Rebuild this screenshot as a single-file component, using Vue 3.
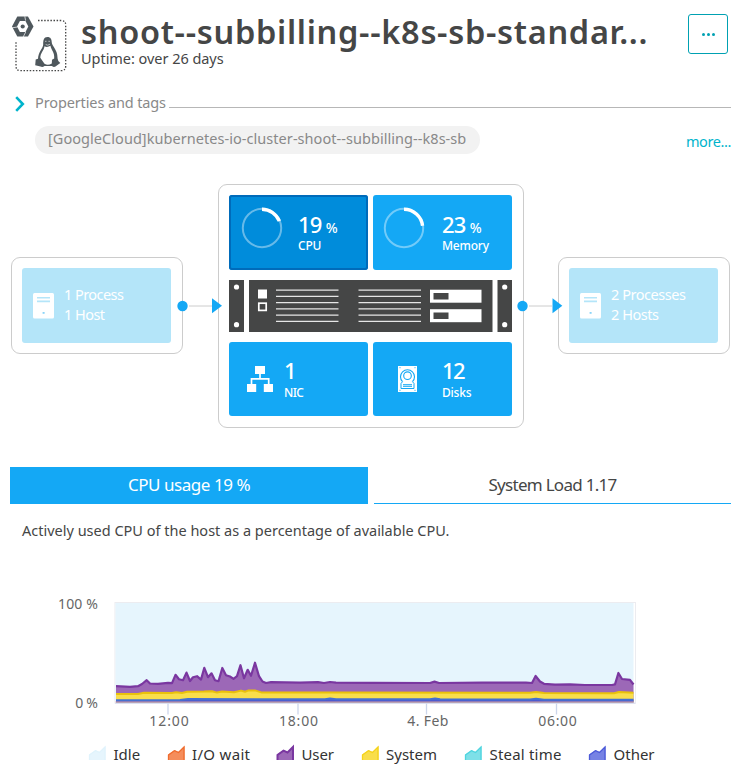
<script setup>
const BASE = 702.5
const user = [
  [116, 686.2], [130, 686.8], [138, 686.2], [142, 684], [146.7, 680.2], [150, 683.5], [158, 683.8], [168, 682.9],
  [172, 683.2], [175.5, 674.8], [179, 679.2], [183, 680.2], [186.5, 672.6], [190, 681], [193, 677.2], [197, 676.2],
  [201, 679.6], [204.3, 667.8], [208, 677.2], [211.5, 673.3], [215, 680.2], [218.5, 681.2], [222.3, 668], [226, 675.2],
  [230, 676.5], [233.5, 678.8], [237, 676.2], [240.5, 665.2], [244, 678.2], [247.7, 669.8], [251, 675.8], [255, 662.7],
  [259, 676.2], [262.5, 681.5], [266, 683], [271, 682.2], [300, 682.6], [318, 682.2], [324, 683], [330, 682], [336, 682.6],
  [374, 682.8], [430, 683], [434.5, 681.6], [439, 683], [482, 682.6], [526, 682.6], [532, 683], [535.6, 676],
  [540, 681.5], [544, 683.8], [555, 684.6], [570, 684.4], [585, 685], [612, 685], [615, 684.4], [618.4, 673], [622, 679],
  [630, 679.8], [633.5, 684.5],
]
const system = [
  [116, 694], [138, 694], [144, 692.8], [172, 693], [176, 692.2], [182, 693], [187, 691.8], [204, 691.6], [212, 691.2],
  [217, 692.6], [222, 691.6], [234, 692.2], [241, 690.6], [245, 691.8], [248, 690.6], [255, 690.4], [262, 692.6],
  [330, 692.6], [530, 692.8], [536, 692], [544, 693], [614, 693.2], [619, 692], [633.5, 692.8],
]
const other = [
  [116, 700.2], [180, 700], [188, 699], [325, 699.3], [330, 698.6], [336, 699.3], [430, 699.3], [435, 698.4],
  [440, 699.3], [530, 699.6], [536, 698.8], [544, 699.8], [633.5, 699.8],
]
const line = (pts) => 'M' + pts.map((p) => p.join(' ')).join('L')
const area = (pts) => `${line(pts)}V${BASE}H${pts[0][0]}Z`

const ticks = [
  { x: 168, label: '12:00', tx: 149.3, w: 39.5 },
  { x: 298, label: '18:00', tx: 279, w: 39 },
  { x: 426.5, label: '4. Feb', tx: 407.3, w: 41 },
  { x: 556.5, label: '06:00', tx: 538.3, w: 38.5 },
]
const legend = [
  { id: 'idle', label: 'Idle' },
  { id: 'io', label: 'I/O wait' },
  { id: 'user', label: 'User' },
  { id: 'system', label: 'System' },
  { id: 'steal', label: 'Steal time' },
  { id: 'other', label: 'Other' },
]
const ventRows = [9.5, 15.7, 22, 28.2, 34.5, 40.7]
</script>

<template>
  <main class="page">
    <header class="header">
      <svg class="host-icon" width="58" height="60" viewBox="0 0 58 60">
        <path d="M27 8.5H50Q54.7 8.5 54.7 13V54Q54.7 58.7 50 58.7H9.5Q5 58.7 5 54V30" fill="none" stroke="#454646" stroke-width="1.3" stroke-dasharray="1.5 1.6" />
        <path d="M1 14.5L6.3 4.6H17L22.5 14.5L17 24.5H6.3Z" fill="#4f585d" />
        <path d="M6 14.5L8.9 9H14.5L17.3 14.5L14.5 20.1H8.9Z" fill="#fff" />
        <path d="M1.2 15.8L6.4 15M12.2 25L14.7 20M13.8 4.3L14.6 8.6" stroke="#fff" stroke-width=".7" />
        <circle cx="11.7" cy="14.5" r="2.1" fill="#4f585d" />
        <path d="M36.5 25C39.5 25 40.7 27.2 40.7 30C40.7 34 46.5 37.5 46.5 45.5C46.5 47 47 47.5 47.3 49L49.3 51L44.5 54.6Q42.5 55.5 41 54H33.5Q31.5 55.8 29.5 54.6L24.2 53.2L24.7 47.5L27 46.8C27.2 40 32 36.5 32.2 32.5C32.1 28.5 32.7 25 36.5 25Z" fill="#4f585d" />
        <path d="M33.5 34.2Q36 35.8 39.5 33.8C40 38 43.8 40 43.2 46.5L41 47.8L40.8 51.5Q37 53.8 33.5 51.8L29.3 45.8C29.3 41 33 38.5 33.5 34.2Z" fill="#fff" />
        <path d="M34 29.3H35.5M37.4 29.3H39M34.7 32.5L36.7 33.2L39 32.2" stroke="#fff" stroke-width=".6" fill="none" />
      </svg>
      <div class="heading">
        <h1>shoot--subbilling--k8s-sb-standar...</h1>
        <p>Uptime: over 26 days</p>
      </div>
      <button class="menu" aria-label="Menu"><i></i><i></i><i></i></button>
    </header>

    <section class="props">
      <div class="props-head">
        <svg width="10" height="16" viewBox="0 0 10 16"><path d="M1.2 1.2L7.8 8L1.2 14.8" fill="none" stroke="#00b4cc" stroke-width="2.6" /></svg>
        <span>Properties and tags</span>
        <hr />
      </div>
      <div class="tags">
        <span class="tag">[GoogleCloud]kubernetes-io-cluster-shoot--subbilling--k8s-sb</span>
        <a class="more">more...</a>
      </div>
    </section>

    <section class="topology">
      <div class="side">
        <div class="side-tile">
          <svg width="21" height="26" viewBox="0 0 21 26"><rect width="21" height="25.5" rx="1.5" fill="#fff" /><path d="M4 4.8H17M4 8.4H17" stroke="#b4e5f9" stroke-width="1.6" /><rect x="9.6" y="19" width="2" height="1.8" fill="#8ad4f8" /></svg>
          <div class="side-text one"><span>1 Process</span><span>1 Host</span></div>
        </div>
      </div>
      <svg class="link" width="35" height="20" viewBox="0 0 35 20"><path d="M6 10H29" stroke="#ccc" /><circle cx="-.5" cy="10" r="5.2" fill="#14a8f5" /><path d="M29 2.2L39 9.8L29 17.2Z" fill="#14a8f5" /></svg>
      <div class="host">
        <div class="tile active">
          <svg class="ring" width="42" height="42" viewBox="0 0 42 42"><circle cx="21" cy="21" r="19.2" class="track" /><circle cx="21" cy="21" r="18.7" class="value" pathLength="100" stroke-dasharray="19 81" transform="rotate(-90 21 21)" /></svg>
          <div class="metric"><b><span>19</span> <small>%</small></b><em>CPU</em></div>
        </div>
        <div class="tile">
          <svg class="ring" width="42" height="42" viewBox="0 0 42 42"><circle cx="21" cy="21" r="19.2" class="track" /><circle cx="21" cy="21" r="18.7" class="value" pathLength="100" stroke-dasharray="23 77" transform="rotate(-90 21 21)" /></svg>
          <div class="metric"><b><span>23</span> <small>%</small></b><em>Memory</em></div>
        </div>
        <svg class="rack" width="283" height="52" viewBox="0 0 283 52">
          <path d="M0 0H15V52H0ZM20 0H263.5V52H20ZM268.5 0H283V52H268.5Z" fill="#454646" />
          <g fill="#fff">
            <circle cx="7.5" cy="7" r="2.6" /><circle cx="7.5" cy="44.7" r="2.6" />
            <circle cx="275.7" cy="7" r="2.6" /><circle cx="275.7" cy="44.7" r="2.6" />
            <rect x="29" y="9.5" width="9" height="9" />
            <rect x="201" y="9.7" width="51.5" height="13" /><rect x="201" y="29.2" width="51.5" height="13" />
          </g>
          <rect x="29.8" y="23.2" width="7.4" height="7.2" fill="none" stroke="#fff" stroke-width="1.7" />
          <path d="M204.5 13H219.5V19.5H204.5ZM204.5 32.5H219.5V39H204.5Z" fill="#454646" />
          <path v-for="y in ventRows" :key="y" :d="`M47 ${y + .7}H109.5M129.5 ${y + .7}H192`" stroke="#e6e6e6" stroke-width="1.3" />
        </svg>
        <div class="tile low nic">
          <svg width="26" height="26" viewBox="0 0 26 26" fill="#fff"><path d="M8 0H18V8H8ZM0 18H9.2V26H0ZM16.8 18H26V26H16.8Z" /><path d="M13 8V12.8M4.5 18V12.8H21.7V18" fill="none" stroke="#fff" stroke-width="1.7" /></svg>
          <div class="metric"><b><span>1</span></b><em>NIC</em></div>
        </div>
        <div class="tile low disks">
          <svg width="19" height="26" viewBox="0 0 19 26"><rect width="19" height="26" fill="#fff" /><g fill="none" stroke="#14a8f5"><path d="M4.5 15.7A7 7 0 1 1 14.5 15.7" stroke-width="1.1" /><circle cx="9.5" cy="9.7" r="3.8" stroke-width="1.1" /><path d="M4.5 15.7L3 17.5V22.5H16V17.5L14.5 15.7M5 18.7H14M5 20.3H14" stroke-width="1" /><path d="M1.5 1.7H2.5M16.5 1.7H17.5M1.5 24.3H2.5M16.5 24.3H17.5" stroke-width="1" /></g></svg>
          <div class="metric"><b><span>12</span></b><em>Disks</em></div>
        </div>
      </div>
      <svg class="link" width="35" height="20" viewBox="0 0 35 20"><path d="M6 10H29" stroke="#ccc" /><circle cx="-.5" cy="10" r="5.2" fill="#14a8f5" /><path d="M29.5 2.2L39.3 9.8L29.5 17.2Z" fill="#14a8f5" /></svg>
      <div class="side">
        <div class="side-tile">
          <svg width="21" height="26" viewBox="0 0 21 26"><rect width="21" height="25.5" rx="1.5" fill="#fff" /><path d="M4 4.8H17M4 8.4H17" stroke="#b4e5f9" stroke-width="1.6" /><rect x="9.6" y="19" width="2" height="1.8" fill="#8ad4f8" /></svg>
          <div class="side-text"><span>2 Processes</span><span>2 Hosts</span></div>
        </div>
      </div>
    </section>

    <nav class="tabs">
      <a class="tab on"><span>CPU usage 19 %</span></a>
      <a class="tab load"><span>System Load 1.17</span></a>
    </nav>
    <p class="desc">Actively used CPU of the host as a percentage of available CPU.</p>

    <svg class="chart" width="748" height="145" viewBox="0 590 748 145">
      <rect x="115" y="602.5" width="520.5" height="100.5" fill="#fff" stroke="#ececf0" />
      <rect x="115.5" y="603" width="518" height="99.5" fill="#e6f5fd" />
      <path :d="area(user)" fill="#9c68b7" />
      <path :d="line(user)" class="stroke" stroke="#7a37a0" stroke-width="2.2" />
      <path :d="area(system)" fill="#f9de4b" />
      <path :d="line(system)" class="stroke" stroke="#e9c10c" stroke-width="2" />
      <path :d="area(other)" fill="#4c5ad0" />
      <path :d="line(other)" class="stroke" stroke="#4570d0" stroke-width="2" />
      <path d="M115.5 702H633.5" stroke="#d59c9c" stroke-width="1.2" />
      <path d="M115 703.3H635.5" stroke="#d7dcf0" stroke-width="1" />
      <g v-for="t in ticks" :key="t.label">
        <path :d="`M${t.x} 703.5V714.5`" stroke="#ccd6eb" stroke-width="1.3" />
        <text :x="t.tx" y="726" :textLength="t.w">{{ t.label }}</text>
      </g>
      <text x="58" y="609" textLength="40">100 %</text>
      <text x="75.3" y="708" textLength="22.7">0 %</text>
    </svg>

    <ul class="legend">
      <li v-for="l in legend" :key="l.id" :class="l.id">
        <svg width="17" height="14" viewBox="0 0 17 14"><path class="fill" d="M0 14V8.5L6.5 4L10.5 6L16.5 0V14Z" /><path class="edge" d="M.5 14V9L6.5 4.7L10.5 6.5L16 1V14" /></svg>
        <span>{{ l.label }}</span>
      </li>
    </ul>
  </main>
</template>

<style>
body { background: #fff; }
</style>

<style scoped>
* { box-sizing: border-box; }
.page { width: 748px; height: 777px; overflow: hidden; display: flex; flex-direction: column; font: 400 15px/20px "Noto Sans", "Open Sans", sans-serif; color: #454646; }
h1, p, ul, hr { margin: 0; padding: 0; }
svg { display: block; flex: none; overflow: visible; }
.header { height: 94px; padding: 12px 20px 0 11px; display: flex; align-items: flex-start; }
.heading { flex: 1; padding-left: 12px; }
h1 { font-size: 32.5px; line-height: 38px; font-weight: 600; letter-spacing: .7px; white-space: nowrap; margin-top: 1px; }
.heading p { font-size: 14.5px; line-height: 20px; letter-spacing: -.04px; margin-top: -3px; }
.menu { width: 40px; height: 40px; margin-top: 2px; padding: 0; border: 1px solid #00a1b2; border-radius: 3px; background: #fff; display: flex; align-items: center; justify-content: center; gap: 2px; }
.menu i { width: 3px; height: 3px; border-radius: 50%; background: #00a1b2; }
.props { height: 90px; padding: 0 17px 0 15px; color: #898989; }
.props-head { display: flex; height: 18px; }
.props-head svg { margin-top: 2px; }
.props-head span { width: 134px; margin-left: 10px; font-size: 14.5px; line-height: 16px; letter-spacing: -.12px; white-space: nowrap; }
.props-head hr { flex: 1; border: 0; height: 1px; margin-top: 13px; background: #b7b7b7; }
.tags { display: flex; justify-content: space-between; margin-top: 14px; padding-left: 20px; }
.tag { width: 445px; height: 28px; border-radius: 14px; background: #f2f2f2; padding: 0 13px; font-size: 14.5px; line-height: 25px; letter-spacing: .05px; white-space: nowrap; }
.more { color: #00b4cc; font-size: 14.5px; line-height: 30px; letter-spacing: -.4px; }
.topology { height: 283px; padding-left: 11px; display: flex; align-items: flex-start; }
.side { width: 172px; height: 97px; margin-top: 73px; padding: 10px; border: 1px solid #ccc; border-radius: 9px; }
.side-tile { width: 149px; height: 75px; padding-left: 11px; border-radius: 3px; background: #b4e5f9; display: flex; align-items: center; gap: 10px; color: #fff; }
.side-text { display: flex; flex-direction: column; white-space: nowrap; letter-spacing: -.46px; font-size: 14.5px; margin-top: -4px; }
.side-text.one { letter-spacing: -.55px; }
.link { margin-top: 112px; position: relative; z-index: 1; }
.host { width: 306px; margin-right: -1px; height: 244px; padding: 10px 11px 11px 10px; border: 1px solid #ccc; border-radius: 9px; display: grid; grid-template-columns: 139px 139px; grid-template-rows: 75px 52px 74px; column-gap: 5px; row-gap: 10px; align-content: start; }
.rack { grid-column: 1 / 3; }
.tile { border-radius: 3px; background: #14a8f5; color: #fff; padding: 12px 0 0 10px; display: flex; align-items: flex-start; }
.tile.active { background: #008cdb; box-shadow: inset 0 0 0 2px #006bba; padding-left: 12px; }
.tile.active .ring + .metric { margin-left: 15px; }
.ring + .metric { margin-left: 17px; margin-top: 4px; }
.ring + .metric em { margin-top: -3px; }
.track { fill: none; stroke: #fff; stroke-opacity: .4; stroke-width: 2; }
.value { fill: none; stroke: #fff; stroke-width: 3.4; }
.metric { display: flex; flex-direction: column; white-space: nowrap; }
.metric b { font-weight: 500; font-size: 22px; line-height: 26px; letter-spacing: -.9px; }
.metric small { font-size: 14px; margin-left: -.5px; }
.metric em { font-style: normal; font-weight: 500; font-size: 12px; line-height: 16px; letter-spacing: -.2px; }
.tile.low { padding-top: 24px; }
.tile.low .metric { margin-top: -9px; }
.tile.low em { margin-top: 2px; }
.nic { padding-left: 18px; }
.nic .metric { margin-left: 11px; }
.nic em { letter-spacing: -.6px; }
.disks { padding-left: 25px; }
.disks .metric { margin-left: 25px; }
.disks b { letter-spacing: -1.5px; }
.tabs { display: flex; gap: 6px; padding: 0 17px 0 10px; height: 37px; }
.tab { height: 37px; width: 358px; text-align: center; font-size: 17px; line-height: 35px; letter-spacing: -.45px; }
.tab.on { background: #14a8f5; color: #fff; }
.tab.load { flex: none; width: 357px; border-bottom: 1px solid #14a8f5; letter-spacing: -.72px; }
.desc { padding-left: 22px; margin-top: 16px; height: 70px; font-size: 14.5px; letter-spacing: 0; }
.chart text { font-size: 14px; fill: #666; }
.stroke { fill: none; stroke-linejoin: round; }
.legend { list-style: none; display: grid; grid-template-columns: 78.5px 109.5px 84.5px 103.5px 124px auto; padding-left: 89px; margin-top: 9px; color: #333; }
.legend li { display: flex; align-items: flex-start; gap: 7.5px; white-space: nowrap; }
.legend svg { margin-top: 2px; }
.edge { fill: none; stroke-width: 1.3; }
.idle .fill { fill: #e6f5fd; } .idle .edge { stroke: #e0f3fc; }
.io .fill { fill: #f58d5b; } .io .edge { stroke: #ef6c2f; }
.user .fill { fill: #9c68b7; } .user .edge { stroke: #7a37a0; stroke-width: 2; }
.system .fill { fill: #f9de4b; } .system .edge { stroke: #f5d31b; }
.steal .fill { fill: #7ee0e8; } .steal .edge { stroke: #4fd5df; }
.other .fill { fill: #7682e4; } .other .edge { stroke: #4c5ad8; }
.io span { letter-spacing: .32px; }
.user span { letter-spacing: -.1px; }
.steal span { letter-spacing: .2px; }
</style>
